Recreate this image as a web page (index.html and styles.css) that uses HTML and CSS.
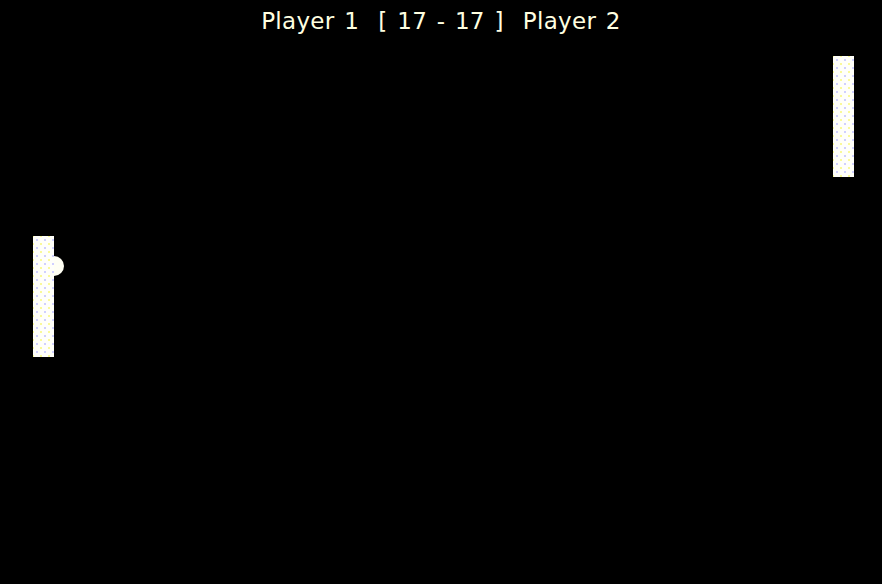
FILE: index.html
```html
<!DOCTYPE html>
<html>
<head>
<meta charset="utf-8">
<link rel="stylesheet" href="styles.css">
</head>
<body>
<div class="court">
  <div class="score">Player 1&nbsp;&nbsp;[ 17 - 17 ]&nbsp;&nbsp;Player 2</div>
  <div class="ball"></div>
  <div class="paddle left"></div>
  <div class="paddle right"></div>
</div>
</body>
</html>
```
FILE: styles.css
```css
html, body {
  margin: 0;
  padding: 0;
  background: #000;
  width: 882px;
  height: 584px;
  overflow: hidden;
}
.court {
  position: relative;
  width: 882px;
  height: 584px;
}
.score {
  padding-top: 6px;
  text-align: center;
  color: #ffffe0;
  font-family: "DejaVu Sans", Verdana, sans-serif;
  font-size: 23px;
  line-height: 30px;
  letter-spacing: 0.3px;
  word-spacing: 2px;
}
.paddle {
  position: absolute;
  width: 21px;
  height: 121px;
  background-color: #fffffa;
  background-image:
    radial-gradient(circle, #d0d0ff 0.8px, transparent 1.2px),
    radial-gradient(circle, #fafa9a 0.8px, transparent 1.2px);
  background-size: 8px 8px, 8px 8px;
  background-position: 0 0, 4px 4px;
}
.left { left: 33px; top: 236px; }
.right { left: 833px; top: 56px; }
.ball {
  position: absolute;
  left: 44px;
  top: 256px;
  width: 20px;
  height: 20px;
  border-radius: 50%;
  background: #fffff4;
}
```
